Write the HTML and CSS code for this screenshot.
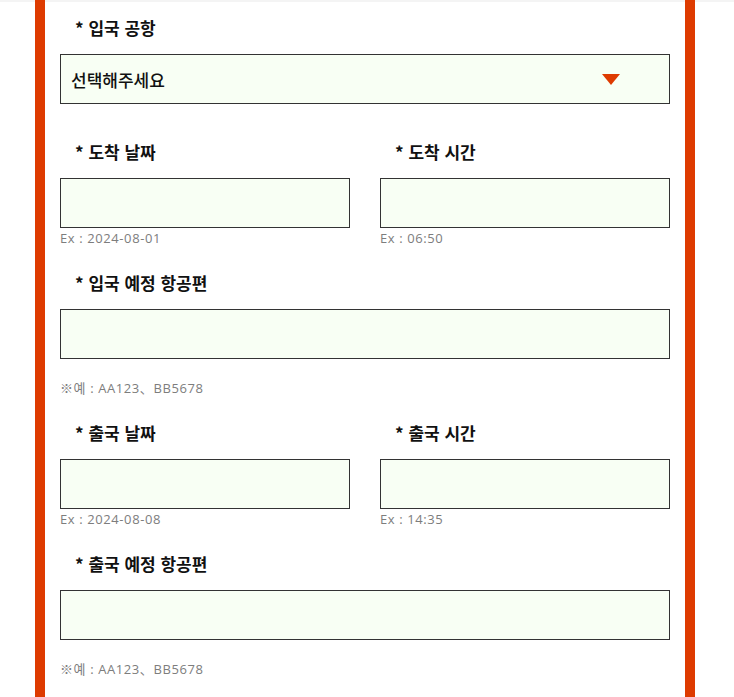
FILE: index.html
```html
<!DOCTYPE html>
<html lang="ko">
<head>
<meta charset="utf-8">
<link rel="stylesheet" href="styles.css">
</head>
<body>
<div class="topline"></div>
<div class="card">
  <div class="field first">
    <div class="label">* 입국 공항</div>
    <div class="select">
      <span>선택해주세요</span>
      <span class="caret"></span>
    </div>
  </div>

  <div class="row">
    <div class="field">
      <div class="label">* 도착 날짜</div>
      <div class="input"></div>
      <div class="hint">Ex : 2024-08-01</div>
    </div>
    <div class="field">
      <div class="label">* 도착 시간</div>
      <div class="input"></div>
      <div class="hint">Ex : 06:50</div>
    </div>
  </div>

  <div class="field">
    <div class="label">* 입국 예정 항공편</div>
    <div class="input"></div>
    <div class="hint spaced">※예 : AA123、BB5678</div>
  </div>

  <div class="row">
    <div class="field">
      <div class="label">* 출국 날짜</div>
      <div class="input"></div>
      <div class="hint">Ex : 2024-08-08</div>
    </div>
    <div class="field">
      <div class="label">* 출국 시간</div>
      <div class="input"></div>
      <div class="hint">Ex : 14:35</div>
    </div>
  </div>

  <div class="field last">
    <div class="label">* 출국 예정 항공편</div>
    <div class="input"></div>
    <div class="hint spaced">※예 : AA123、BB5678</div>
  </div>
</div>
</body>
</html>
```
FILE: styles.css
```css
html, body {
  margin: 0;
  padding: 0;
  background: #ffffff;
}
body {
  font-family: "Noto Sans CJK KR", "Noto Sans", sans-serif;
  color: #111;
  position: relative;
}
.topline {
  position: absolute;
  left: 0;
  right: 0;
  top: 0;
  height: 2px;
  background: #f4f4f4;
}
.card {
  position: relative;
  z-index: 1;
  margin-left: 35px;
  width: 610px;
  min-height: 682px;
  border-left: 10px solid #de3b00;
  border-right: 10px solid #de3b00;
  padding: 15px 15px 0;
}
.field {
  margin-bottom: 22px;
}
.field.first {
  margin-bottom: 35px;
}
.field.last {
  margin-bottom: 0;
}
.row {
  display: grid;
  grid-template-columns: 1fr 1fr;
  column-gap: 30px;
}
.label {
  font-size: 17px;
  font-weight: 700;
  line-height: 26px;
  padding-left: 15px;
  margin-bottom: 13px;
  color: #111;
}
.input, .select {
  height: 50px;
  box-sizing: border-box;
  border: 1px solid #333;
  background: #f8fff4;
}
.select {
  display: flex;
  align-items: center;
  justify-content: space-between;
  padding: 0 49px 0 10px;
  font-size: 17px;
  font-weight: 500;
  color: #111;
}
.caret {
  width: 0;
  height: 0;
  border-left: 9px solid transparent;
  border-right: 9px solid transparent;
  border-top: 11px solid #de3b00;
}
.hint {
  font-family: "Open Sans", "Noto Sans CJK KR", sans-serif;
  font-size: 13px;
  letter-spacing: 0.6px;
  line-height: 20px;
  color: #7d7d7d;
}
.hint.spaced {
  margin-top: 19px;
}
```
